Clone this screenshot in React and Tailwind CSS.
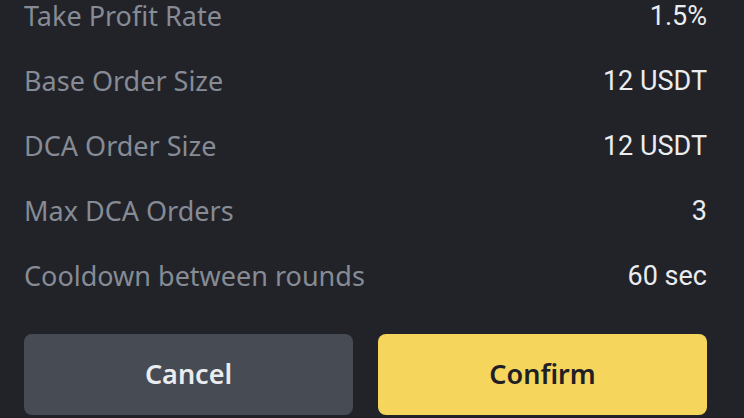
import React from 'react'

const rows = [
  ['Take Profit Rate', '1.5%'],
  ['Base Order Size', '12 USDT'],
  ['DCA Order Size', '12 USDT'],
  ['Max DCA Orders', '3'],
  ['Cooldown between rounds', '60 sec'],
]

export default function App() {
  return (
    <div className="w-[744px] h-[418px] overflow-hidden bg-[#212329] pl-[24px] pr-[37px]">
      {/* settings list */}
      <div className="-mt-[16px]">
        {rows.map(([label, value]) => (
          <div key={label} className="flex items-center justify-between h-[65px]">
            <span className="text-[27px] text-[#868b95] font-['Noto_Sans',sans-serif]">{label}</span>
            <span className="text-[27px] text-[#eaecef] font-['Roboto',sans-serif]">{value}</span>
          </div>
        ))}
      </div>

      {/* actions */}
      <div className="mt-[25px] flex gap-[25px]">
        <button className="flex-1 h-[81px] rounded-[8px] bg-[#474b54] text-[#eaecef] text-[27px] font-semibold font-['Noto_Sans',sans-serif]">
          Cancel
        </button>
        <button className="flex-1 h-[81px] rounded-[8px] bg-[#f5d55c] text-[#1e2026] text-[27px] font-semibold font-['Noto_Sans',sans-serif]">
          Confirm
        </button>
      </div>
    </div>
  )
}
